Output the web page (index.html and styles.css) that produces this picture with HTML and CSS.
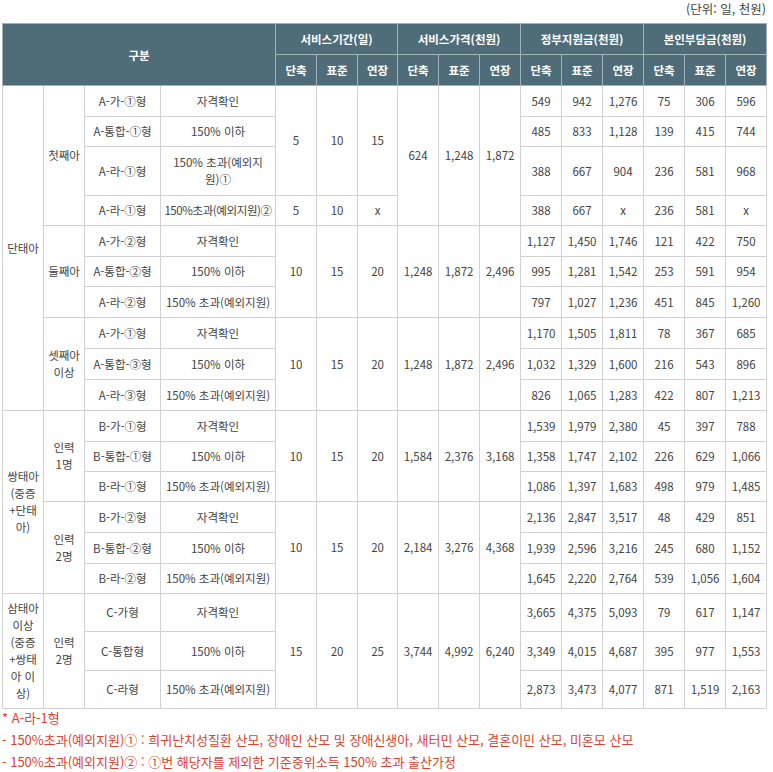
FILE: index.html
```html
<!DOCTYPE html>
<html lang="ko">
<head>
<meta charset="utf-8">
<title>산모신생아 건강관리 지원 서비스 가격</title>
<link rel="stylesheet" href="styles.css">
</head>
<body>
<div class="wrap">
  <div class="unit">(단위: 일, 천원)</div>
  <table class="grid">
    <colgroup>
      <col class="c41"><col class="c41"><col class="c76"><col class="c115">
      <col class="c41"><col class="c41"><col class="c40">
      <col class="c41"><col class="c41"><col class="c41">
      <col class="c41"><col class="c41"><col class="c41">
      <col class="c41"><col class="c41"><col class="c41">
    </colgroup>
    <thead>
      <tr class="hr">
        <th colspan="4" rowspan="2">구분</th>
        <th colspan="3">서비스기간(일)</th>
        <th colspan="3">서비스가격(천원)</th>
        <th colspan="3">정부지원금(천원)</th>
        <th colspan="3">본인부담금(천원)</th>
      </tr>
      <tr class="hr">
        <th>단축</th><th>표준</th><th>연장</th>
        <th>단축</th><th>표준</th><th>연장</th>
        <th>단축</th><th>표준</th><th>연장</th>
        <th>단축</th><th>표준</th><th>연장</th>
      </tr>
    </thead>
    <tbody>
      <tr>
        <td rowspan="10">단태아</td>
        <td rowspan="4">첫째아</td>
        <td>A-가-①형</td><td>자격확인</td>
        <td rowspan="3">5</td><td rowspan="3">10</td><td rowspan="3">15</td>
        <td rowspan="4">624</td><td rowspan="4">1,248</td><td rowspan="4">1,872</td>
        <td>549</td><td>942</td><td>1,276</td><td>75</td><td>306</td><td>596</td>
      </tr>
      <tr class="s">
        <td>A-통합-①형</td><td>150% 이하</td>
        <td>485</td><td>833</td><td>1,128</td><td>139</td><td>415</td><td>744</td>
      </tr>
      <tr class="tall">
        <td>A-라-①형</td><td>150% 초과(예외지<br>원)①</td>
        <td>388</td><td>667</td><td>904</td><td>236</td><td>581</td><td>968</td>
      </tr>
      <tr class="s">
        <td>A-라-①형</td><td class="nw">150%초과(예외지원)②</td>
        <td>5</td><td>10</td><td>x</td>
        <td>388</td><td>667</td><td>x</td><td>236</td><td>581</td><td>x</td>
      </tr>
      <tr>
        <td rowspan="3">둘째아</td>
        <td>A-가-②형</td><td>자격확인</td>
        <td rowspan="3">10</td><td rowspan="3">15</td><td rowspan="3">20</td>
        <td rowspan="3">1,248</td><td rowspan="3">1,872</td><td rowspan="3">2,496</td>
        <td>1,127</td><td>1,450</td><td>1,746</td><td>121</td><td>422</td><td>750</td>
      </tr>
      <tr class="s">
        <td>A-통합-②형</td><td>150% 이하</td>
        <td>995</td><td>1,281</td><td>1,542</td><td>253</td><td>591</td><td>954</td>
      </tr>
      <tr>
        <td>A-라-②형</td><td>150% 초과(예외지원)</td>
        <td>797</td><td>1,027</td><td>1,236</td><td>451</td><td>845</td><td>1,260</td>
      </tr>
      <tr>
        <td rowspan="3">셋째아<br>이상</td>
        <td>A-가-①형</td><td>자격확인</td>
        <td rowspan="3">10</td><td rowspan="3">15</td><td rowspan="3">20</td>
        <td rowspan="3">1,248</td><td rowspan="3">1,872</td><td rowspan="3">2,496</td>
        <td>1,170</td><td>1,505</td><td>1,811</td><td>78</td><td>367</td><td>685</td>
      </tr>
      <tr>
        <td>A-통합-③형</td><td>150% 이하</td>
        <td>1,032</td><td>1,329</td><td>1,600</td><td>216</td><td>543</td><td>896</td>
      </tr>
      <tr>
        <td>A-라-③형</td><td>150% 초과(예외지원)</td>
        <td>826</td><td>1,065</td><td>1,283</td><td>422</td><td>807</td><td>1,213</td>
      </tr>
      <tr>
        <td rowspan="6">쌍태아<br>(중증<br>+단태<br>아)</td>
        <td rowspan="3">인력<br>1명</td>
        <td>B-가-①형</td><td>자격확인</td>
        <td rowspan="3">10</td><td rowspan="3">15</td><td rowspan="3">20</td>
        <td rowspan="3">1,584</td><td rowspan="3">2,376</td><td rowspan="3">3,168</td>
        <td>1,539</td><td>1,979</td><td>2,380</td><td>45</td><td>397</td><td>788</td>
      </tr>
      <tr class="s">
        <td>B-통합-①형</td><td>150% 이하</td>
        <td>1,358</td><td>1,747</td><td>2,102</td><td>226</td><td>629</td><td>1,066</td>
      </tr>
      <tr class="s">
        <td>B-라-①형</td><td>150% 초과(예외지원)</td>
        <td>1,086</td><td>1,397</td><td>1,683</td><td>498</td><td>979</td><td>1,485</td>
      </tr>
      <tr>
        <td rowspan="3">인력<br>2명</td>
        <td>B-가-②형</td><td>자격확인</td>
        <td rowspan="3">10</td><td rowspan="3">15</td><td rowspan="3">20</td>
        <td rowspan="3">2,184</td><td rowspan="3">3,276</td><td rowspan="3">4,368</td>
        <td>2,136</td><td>2,847</td><td>3,517</td><td>48</td><td>429</td><td>851</td>
      </tr>
      <tr>
        <td>B-통합-②형</td><td>150% 이하</td>
        <td>1,939</td><td>2,596</td><td>3,216</td><td>245</td><td>680</td><td>1,152</td>
      </tr>
      <tr class="s">
        <td>B-라-②형</td><td>150% 초과(예외지원)</td>
        <td>1,645</td><td>2,220</td><td>2,764</td><td>539</td><td>1,056</td><td>1,604</td>
      </tr>
      <tr class="mid">
        <td rowspan="3">삼태아<br>이상<br>(중증<br>+쌍태<br>아 이<br>상)</td>
        <td rowspan="3">인력<br>2명</td>
        <td>C-가형</td><td>자격확인</td>
        <td rowspan="3">15</td><td rowspan="3">20</td><td rowspan="3">25</td>
        <td rowspan="3">3,744</td><td rowspan="3">4,992</td><td rowspan="3">6,240</td>
        <td>3,665</td><td>4,375</td><td>5,093</td><td>79</td><td>617</td><td>1,147</td>
      </tr>
      <tr class="mid2">
        <td>C-통합형</td><td>150% 이하</td>
        <td>3,349</td><td>4,015</td><td>4,687</td><td>395</td><td>977</td><td>1,553</td>
      </tr>
      <tr class="mid">
        <td>C-라형</td><td>150% 초과(예외지원)</td>
        <td>2,873</td><td>3,473</td><td>4,077</td><td>871</td><td>1,519</td><td>2,163</td>
      </tr>
    </tbody>
  </table>
  <div class="notes">
    <p>* A-라-1형</p>
    <p>- 150%초과(예외지원)① : 희귀난치성질환 산모, 장애인 산모 및 장애신생아, 새터민 산모, 결혼이민 산모, 미혼모 산모</p>
    <p>- 150%초과(예외지원)② : ①번 해당자를 제외한 기준중위소득 150% 초과 출산가정</p>
  </div>
</div>
</body>
</html>
```

FILE: styles.css
```css
html, body {
  margin: 0;
  padding: 0;
  background: #ffffff;
}

body {
  font-family: "Noto Sans CJK KR", "Noto Sans", sans-serif;
  color: #444444;
}

.wrap {
  width: 764px;
  padding-left: 2px;
}

.unit {
  height: 23px;
  line-height: 17px;
  font-size: 12.5px;
  text-align: right;
  color: #444444;
}

.grid {
  width: 764px;
  table-layout: fixed;
  border-collapse: collapse;
  font-size: 11.5px;
}

.c41 { width: 41px; }
.c40 { width: 40px; }
.c76 { width: 76px; }
.c115 { width: 115px; }

.grid th {
  background: #4f6c79;
  color: #ffffff;
  font-weight: bold;
  font-size: 11.5px;
  border: 1px solid #a3b0b7;
  padding: 0;
  text-align: center;
  vertical-align: middle;
}

.grid tr.hr {
  height: 31px;
}

.grid tbody tr {
  height: 31px;
}

.grid tbody tr.s {
  height: 30px;
}

.grid tbody tr.tall {
  height: 49px;
}

.grid tbody tr.mid {
  height: 38px;
}

.grid tbody tr.mid2 {
  height: 39px;
}

.grid td {
  border: 1px solid #d2d2d2;
  padding: 0 2px;
  text-align: center;
  vertical-align: middle;
  line-height: 17px;
  color: #444444;
}

.grid td.nw {
  white-space: nowrap;
  padding: 0;
  letter-spacing: -0.4px;
}

.notes {
  margin-top: -2px;
  font-size: 13px;
  color: #d9432f;
}

.notes p {
  margin: 0;
  line-height: 22px;
  white-space: nowrap;
}
```
